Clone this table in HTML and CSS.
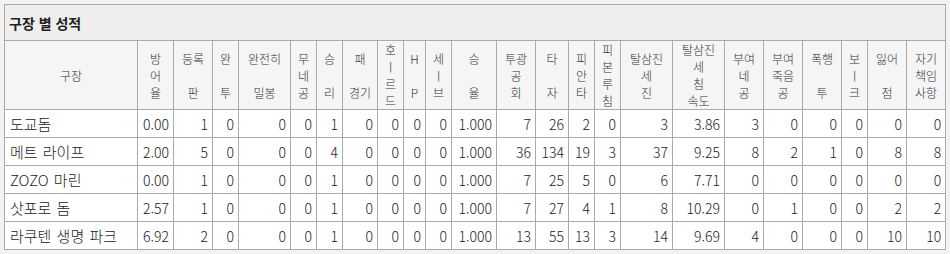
FILE: index.html
```html
<!DOCTYPE html>
<html lang="ko">
<head>
<meta charset="utf-8">
<title>구장 별 성적</title>
<link rel="stylesheet" href="styles.css">
</head>
<body>
<table class="stats">
  <colgroup>
    <col class="w133"><col class="w36"><col class="w39"><col class="w26"><col class="w52">
    <col class="w26"><col class="w26"><col class="w35"><col class="w26"><col class="w22">
    <col class="w26"><col class="w45"><col class="w39"><col class="w33"><col class="w26">
    <col class="w26"><col class="w52"><col class="w52"><col class="w39"><col class="w39">
    <col class="w39"><col class="w26"><col class="w39"><col class="w39">
  </colgroup>
  <thead>
    <tr class="title-row"><th class="title" colspan="24">구장 별 성적</th></tr>
    <tr class="head-row">
      <th>구장</th>
      <th>방<br>어<br>율</th>
      <th>등록<br><br>판</th>
      <th>완<br><br>투</th>
      <th>완전히<br><br>밀봉</th>
      <th>무<br>네<br>공</th>
      <th>승<br><br>리</th>
      <th>패<br><br>경기</th>
      <th>호<br>ㅣ<br>르<br>드</th>
      <th>H<br><br>P</th>
      <th>세<br>ㅣ<br>브</th>
      <th>승<br><br>율</th>
      <th>투광<br>공<br>회</th>
      <th>타<br><br>자</th>
      <th>피<br>안<br>타</th>
      <th>피<br>본<br>루<br>침</th>
      <th>탈삼진<br>세<br>진</th>
      <th>탈삼진<br>세<br>침<br>속도</th>
      <th>부여<br>네<br>공</th>
      <th>부여<br>죽음<br>공</th>
      <th>폭행<br><br>투</th>
      <th>보<br>ㅣ<br>크</th>
      <th>잃어<br><br>점</th>
      <th>자기<br>책임<br>사항</th>
    </tr>
  </thead>
  <tbody>
    <tr><td class="name">도교돔</td><td>0.00</td><td>1</td><td>0</td><td>0</td><td>0</td><td>1</td><td>0</td><td>0</td><td>0</td><td>0</td><td>1.000</td><td>7</td><td>26</td><td>2</td><td>0</td><td>3</td><td>3.86</td><td>3</td><td>0</td><td>0</td><td>0</td><td>0</td><td>0</td></tr>
    <tr><td class="name">메트 라이프</td><td>2.00</td><td>5</td><td>0</td><td>0</td><td>0</td><td>4</td><td>0</td><td>0</td><td>0</td><td>0</td><td>1.000</td><td>36</td><td>134</td><td>19</td><td>3</td><td>37</td><td>9.25</td><td>8</td><td>2</td><td>1</td><td>0</td><td>8</td><td>8</td></tr>
    <tr><td class="name">ZOZO 마린</td><td>0.00</td><td>1</td><td>0</td><td>0</td><td>0</td><td>1</td><td>0</td><td>0</td><td>0</td><td>0</td><td>1.000</td><td>7</td><td>25</td><td>5</td><td>0</td><td>6</td><td>7.71</td><td>0</td><td>0</td><td>0</td><td>0</td><td>0</td><td>0</td></tr>
    <tr><td class="name">삿포로 돔</td><td>2.57</td><td>1</td><td>0</td><td>0</td><td>0</td><td>1</td><td>0</td><td>0</td><td>0</td><td>0</td><td>1.000</td><td>7</td><td>27</td><td>4</td><td>1</td><td>8</td><td>10.29</td><td>0</td><td>1</td><td>0</td><td>0</td><td>2</td><td>2</td></tr>
    <tr><td class="name">라쿠텐 생명 파크</td><td>6.92</td><td>2</td><td>0</td><td>0</td><td>0</td><td>1</td><td>0</td><td>0</td><td>0</td><td>0</td><td>1.000</td><td>13</td><td>55</td><td>13</td><td>3</td><td>14</td><td>9.69</td><td>4</td><td>0</td><td>0</td><td>0</td><td>10</td><td>10</td></tr>
  </tbody>
</table>
</body>
</html>
```

FILE: styles.css
```css
html, body {
  margin: 0;
  padding: 0;
  background: #f2f2f2;
}
body {
  padding: 4px;
  font-family: "Noto Sans CJK KR", "Noto Sans", sans-serif;
  color: #222;
}
.stats {
  table-layout: fixed;
  border-collapse: collapse;
  width: 942px;
  background: #fff;
  font-size: 14px;
}
.w133 { width: 133px; }
.w52 { width: 52px; }
.w45 { width: 45px; }
.w39 { width: 39px; }
.w36 { width: 36px; }
.w35 { width: 35px; }
.w33 { width: 33px; }
.w26 { width: 26px; }
.w22 { width: 22px; }
.stats th,
.stats td {
  border: 1px solid #aaa;
  padding: 0 4px;
  overflow: hidden;
  white-space: nowrap;
}
.title-row { height: 36px; }
.title {
  background: #eee;
  text-align: left;
  font-weight: bold;
  font-size: 14px;
  padding-left: 6px;
  color: #222;
}
.head-row { height: 69px; }
.head-row th {
  background: #f5f5f5;
  font-weight: 300;
  font-size: 12px;
  line-height: 17px;
  color: #333;
  text-align: center;
  vertical-align: middle;
  padding: 0;
}
.stats tbody tr { height: 28px; }
.stats tbody td {
  text-align: right;
  line-height: 20px;
  font-weight: 300;
  color: #222;
}
.stats tbody td.name {
  text-align: left;
  padding-left: 5px;
  font-size: 15px;
  word-spacing: 1px;
}
```
